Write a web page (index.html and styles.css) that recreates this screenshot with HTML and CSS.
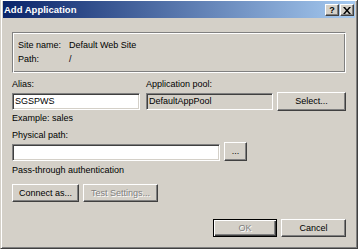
FILE: index.html
```html
<!DOCTYPE html>
<html lang="en">
<head>
    <meta charset="UTF-8">
    <title>Add Application</title>
    <link rel="stylesheet" href="styles.css">
</head>
<body>
    <div class="window">
        <div class="titlebar">
            <span class="title">Add Application</span>
            <div class="caption-buttons">
                <span class="caption-btn help">?</span>
                <span class="caption-btn close">
                    <svg width="8" height="7" viewBox="0 0 8 7">
                        <path d="M0 0h2l2 2.5L6 0h2L5 3.5 8 7H6L4 4.5 2 7H0l3-3.5z" fill="#000"/>
                    </svg>
                </span>
            </div>
        </div>

        <div class="dialog-body">
            <div class="group">
                <div class="info-row"><span class="info-label">Site name:</span><span>Default Web Site</span></div>
                <div class="info-row"><span class="info-label">Path:</span><span>/</span></div>
            </div>

            <div class="field-row">
                <div class="field alias-field">
                    <span class="label">Alias:</span>
                    <div class="textbox">SGSPWS</div>
                </div>
                <div class="field pool-field">
                    <span class="label">Application pool:</span>
                    <div class="textbox readonly">DefaultAppPool</div>
                </div>
                <button class="btn select-btn">Select...</button>
            </div>
            <div class="hint">Example: sales</div>

            <span class="label path-label">Physical path:</span>
            <div class="path-row">
                <div class="textbox path-box"></div>
                <button class="btn browse-btn">...</button>
            </div>
            <div class="hint auth-hint">Pass-through authentication</div>

            <div class="btn-row">
                <button class="btn connect-btn">Connect as...</button>
                <button class="btn test-btn" disabled>Test Settings...</button>
            </div>

            <div class="footer">
                <button class="btn default ok-btn" disabled>OK</button>
                <button class="btn cancel-btn">Cancel</button>
            </div>
        </div>
    </div>
</body>
</html>
```
FILE: styles.css
```css
body {
    margin: 0;
    padding: 0;
    font-family: 'Liberation Sans', Arial, sans-serif;
    font-size: 9px;
    line-height: 13px;
    color: #000;
    background-color: #d4d0c8;
}
.window {
    width: 358px;
    height: 249px;
    box-sizing: border-box;
    background-color: #d4d0c8;
    border-left: 1px solid #d4d0c8;
    border-right: 1px solid #404040;
    border-bottom: 1px solid #404040;
    box-shadow: inset 1px 0 #fff, inset 0 1px #fff, inset -1px -1px #808080;
    padding: 1px 2px 2px 2px;
}
.titlebar {
    height: 17px;
    display: flex;
    justify-content: space-between;
    background: linear-gradient(to right, #0a246a, #a6caf0);
}
.title {
    color: #fff;
    font-weight: bold;
    font-size: 9.5px;
    line-height: 17px;
    padding-left: 1px;
}
.caption-buttons {
    display: flex;
    gap: 1px;
    margin-top: 3px;
    margin-right: 1px;
}
.caption-btn {
    width: 14px;
    height: 12px;
    box-sizing: border-box;
    background-color: #d4d0c8;
    border: 1px solid;
    border-color: #fff #404040 #404040 #fff;
    box-shadow: inset -1px -1px #808080;
    display: flex;
    align-items: center;
    justify-content: center;
    font-weight: bold;
    font-size: 9px;
    line-height: 10px;
}
.dialog-body {
    padding: 14px 9px 0 9px;
}
.group {
    height: 41px;
    box-sizing: border-box;
    border: 1px solid;
    border-color: #808080 #fff #fff #808080;
    box-shadow: inset 1px 1px #fff, inset -1px -1px #808080;
    padding: 5px 5px 0 5px;
}
.info-row {
    display: flex;
    line-height: 14px;
}
.info-label {
    width: 51px;
}
.field-row {
    display: flex;
    align-items: flex-end;
    margin-top: 5px;
}
.field {
    display: flex;
    flex-direction: column;
}
.label {
    display: block;
}
.textbox {
    height: 17px;
    box-sizing: border-box;
    margin-top: 2px;
    background-color: #fff;
    border: 1px solid;
    border-color: #808080 #fff #fff #808080;
    box-shadow: inset 1px 1px #404040, inset -1px -1px #d4d0c8;
    padding: 0 2px;
    line-height: 15px;
    white-space: nowrap;
}
.textbox.readonly {
    background-color: #d4d0c8;
}
.alias-field {
    width: 128px;
}
.pool-field {
    width: 127px;
    margin-left: 6px;
}
.btn {
    font-family: inherit;
    font-size: 9px;
    color: #000;
    background-color: #d4d0c8;
    border: 1px solid;
    border-color: #fff #404040 #404040 #fff;
    box-shadow: inset -1px -1px #808080;
    border-radius: 0;
    padding: 0;
    margin: 0;
    box-sizing: border-box;
    height: 18px;
    line-height: 15px;
}
.btn:disabled {
    color: #808080;
    text-shadow: 1px 1px #fff;
}
.btn.default {
    border-color: #000;
    box-shadow: inset 1px 1px #fff, inset -1px -1px #404040, inset -2px -2px #808080;
}
.select-btn {
    width: 69px;
    height: 19px;
    margin-left: 4px;
    margin-bottom: -1px;
}
.hint {
    margin-top: 2px;
}
.path-label {
    margin-top: 4px;
}
.path-row {
    display: flex;
    align-items: center;
}
.path-box {
    width: 208px;
    margin-top: 1px;
}
.browse-btn {
    width: 23px;
    height: 19px;
    margin-left: 4px;
}
.auth-hint {
    margin-top: 3px;
}
.btn-row {
    display: flex;
    gap: 4px;
    margin-top: 7px;
}
.connect-btn {
    width: 67px;
}
.test-btn {
    width: 75px;
}
.footer {
    display: flex;
    justify-content: flex-end;
    gap: 4px;
    margin-top: 17px;
}
.ok-btn {
    width: 64px;
}
.cancel-btn {
    width: 65px;
}
```
